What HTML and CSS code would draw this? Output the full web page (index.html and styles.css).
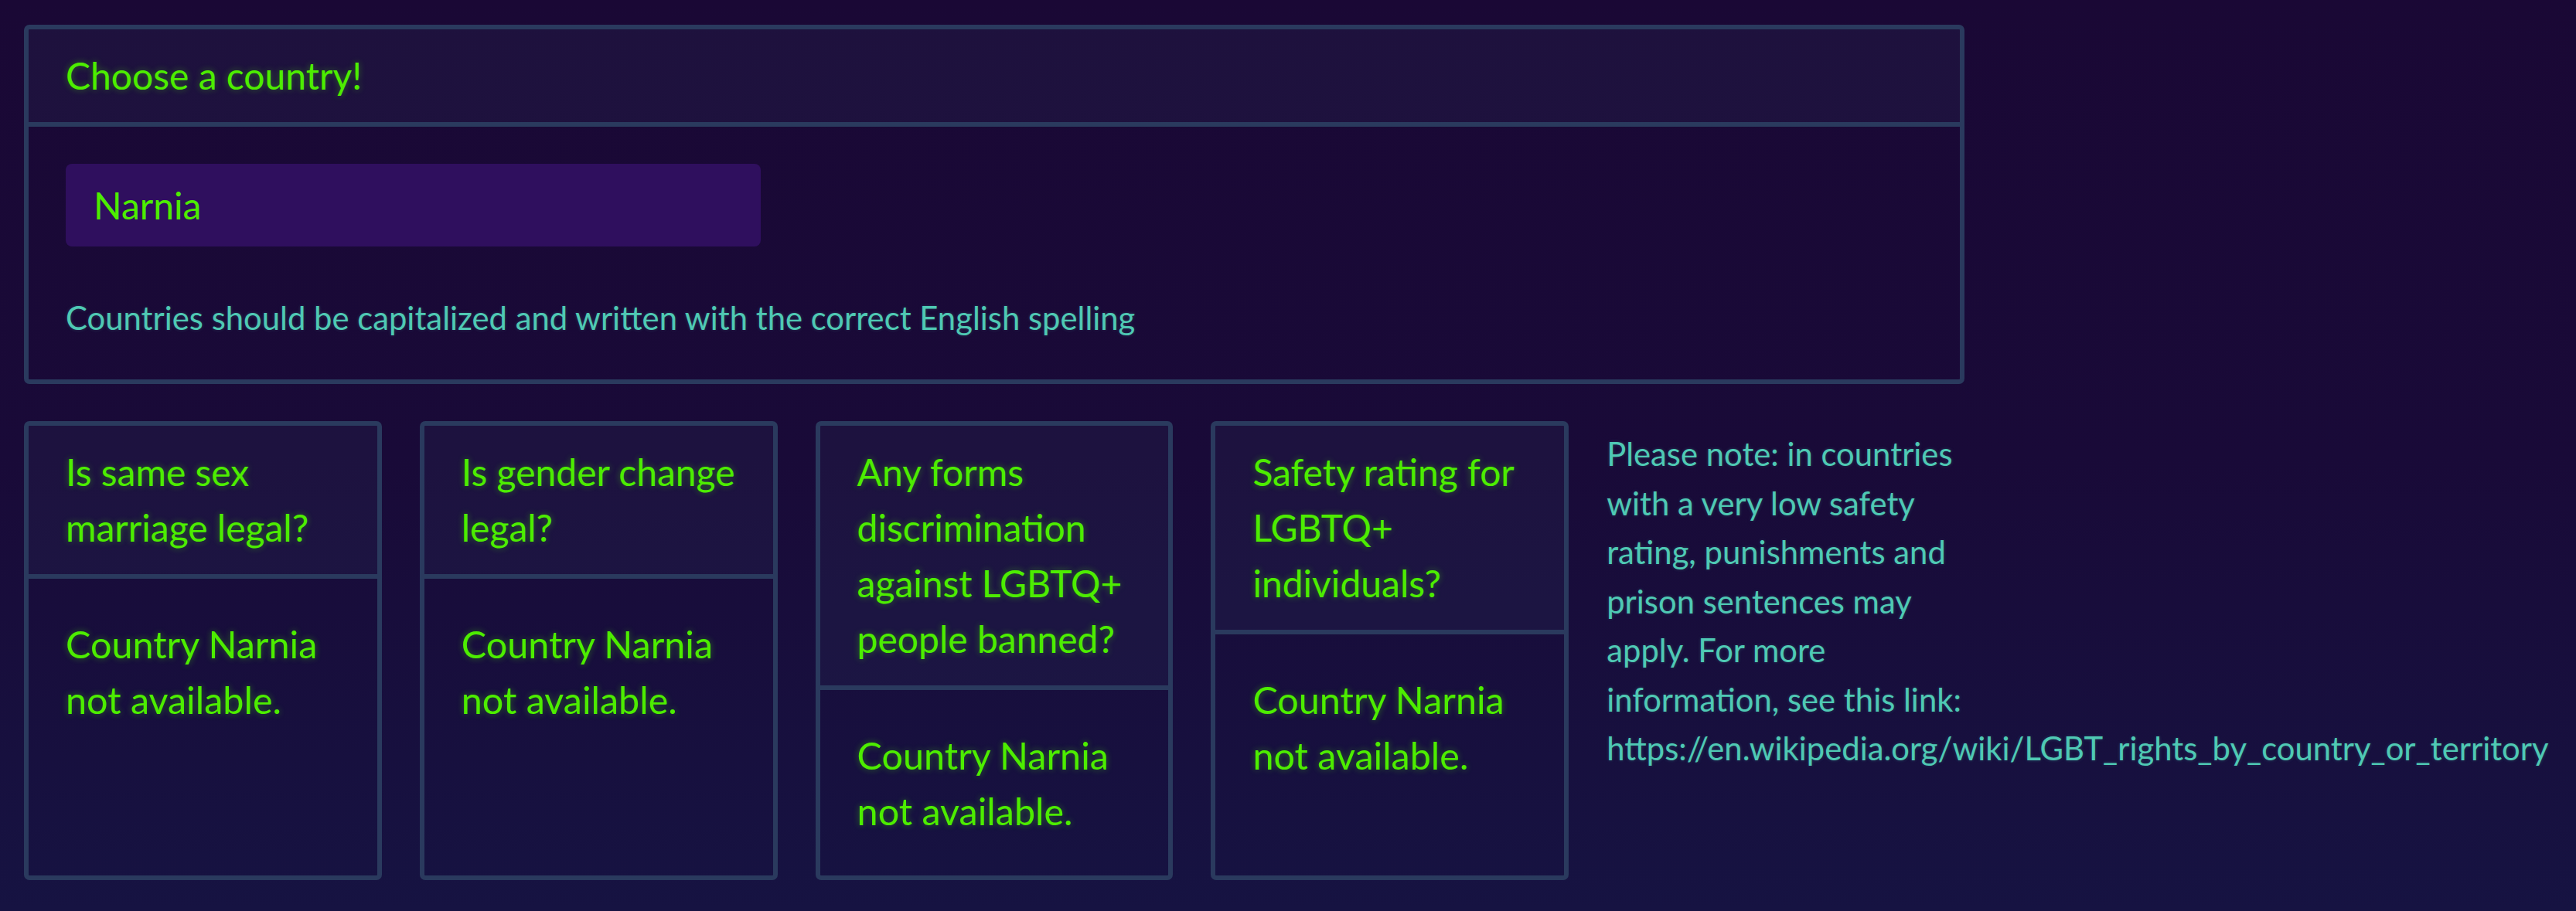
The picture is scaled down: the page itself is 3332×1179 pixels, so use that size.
FILE: index.html
```html
<!DOCTYPE html>
<html lang="en">
<head>
<meta charset="utf-8">
<title>LGBTQ+ rights by country</title>
<link rel="stylesheet" href="styles.css">
</head>
<body>
<main class="page">
  <section class="card card-wide">
    <div class="card-header">Choose a country!</div>
    <div class="card-body">
      <input class="country-input" type="text" value="Narnia">
      <p class="hint">Countries should be capitalized and written with the correct English spelling</p>
    </div>
  </section>

  <section class="results">
    <div class="card">
      <div class="card-header">Is same sex marriage legal?</div>
      <div class="card-body">Country Narnia not available.</div>
    </div>
    <div class="card">
      <div class="card-header">Is gender change legal?</div>
      <div class="card-body">Country Narnia not available.</div>
    </div>
    <div class="card">
      <div class="card-header">Any forms discrimination against LGBTQ+ people banned?</div>
      <div class="card-body">Country Narnia not available.</div>
    </div>
    <div class="card">
      <div class="card-header">Safety rating for LGBTQ+ individuals?</div>
      <div class="card-body">Country Narnia not available.</div>
    </div>
    <p class="note">Please note: in countries with a very low safety rating, punishments and prison sentences may apply. For more information, see this link: https://en.wikipedia.org/wiki/LGBT_rights_by_country_or_territory</p>
  </section>
</main>
</body>
</html>
```

FILE: styles.css
```css
html, body {
  margin: 0;
  padding: 0;
}

body {
  min-height: 100vh;
  background: linear-gradient(180deg, #1a0835 0%, #190a38 50%, #161342 100%);
  font-family: Lato, "Noto Sans", sans-serif;
  color: #4fc9b4;
  overflow: hidden;
}

.page {
  width: 2510px;
  padding: 32px 0 0 31px;
  display: flex;
  flex-direction: column;
  gap: 48px;
}

.card {
  display: flex;
  flex-direction: column;
  min-width: 0;
  border: 6px solid #2a3a5e;
  border-radius: 7px;
  background: transparent;
}

.card-header {
  padding: 24px 40px 24px 48px;
  font-size: 48px;
  line-height: 72px;
  color: #4ded00;
  text-shadow: 0 0 9px rgba(77, 237, 0, 0.4);
  background: rgba(46, 52, 92, 0.22);
  border-bottom: 6px solid #2a3a5e;
}

.card-body {
  flex: 1;
  padding: 48px 40px 48px 48px;
  font-size: 48.5px;
  line-height: 72px;
  color: #4ded00;
  text-shadow: 0 0 9px rgba(77, 237, 0, 0.4);
}

.card-wide .card-body {
  display: flex;
  flex-direction: column;
  align-items: flex-start;
}

.country-input {
  box-sizing: border-box;
  width: 899px;
  height: 107px;
  margin: 0;
  padding: 0 36px;
  border: none;
  border-radius: 8px;
  background: #2f0f5e;
  color: #4ded00;
  font-family: Lato, "Noto Sans", sans-serif;
  font-size: 48px;
  outline: none;
}

.hint {
  margin: 60px 0 0;
  font-size: 41.8px;
  line-height: 64px;
  color: #4fc9b4;
  text-shadow: 0 0 4px rgba(79, 201, 180, 0.25);
}

.results {
  display: grid;
  grid-template-columns: repeat(5, minmax(0, 1fr));
  column-gap: 49px;
  align-items: stretch;
}

.note {
  min-width: 0;
  margin: 11px 0 0;
  font-size: 41.8px;
  line-height: 63.5px;
  color: #4fc9b4;
  text-shadow: 0 0 4px rgba(79, 201, 180, 0.25);
  white-space: normal;
}
```
